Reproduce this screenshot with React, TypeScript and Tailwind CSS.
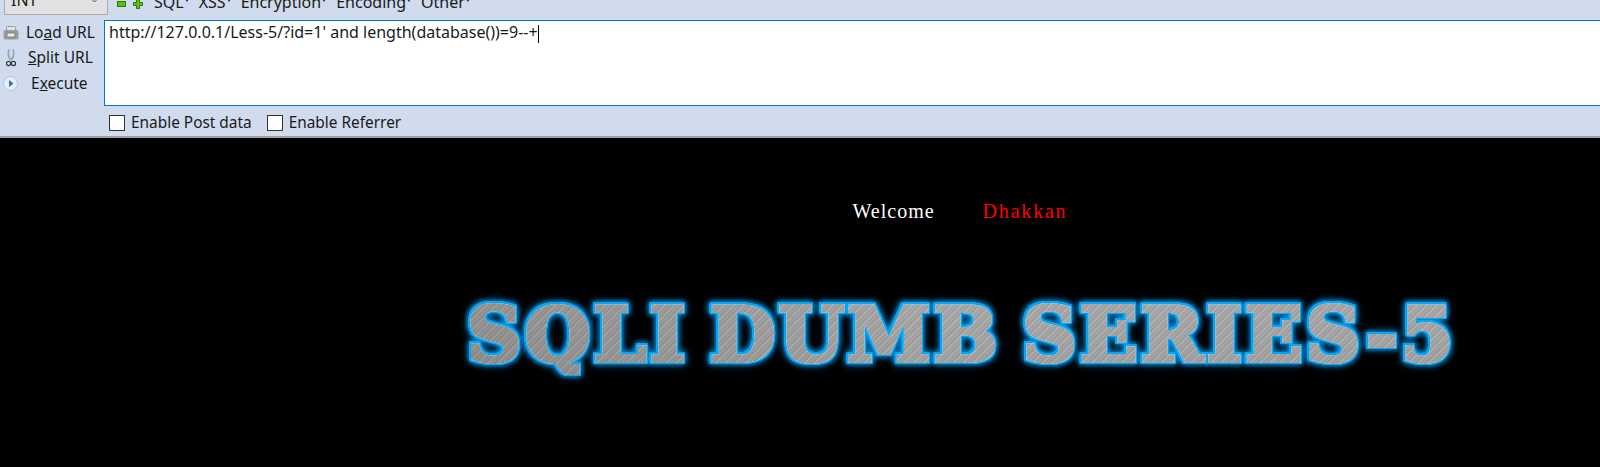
const sans = "font-['Noto_Sans',sans-serif]"

const MenuItem = ({ label }: { label: string }) => (
  <span className="flex items-start">
    {label}
    <svg width="4" height="3" viewBox="0 0 4 3" className="mt-[7px] ml-[1px]">
      <path d="M0 0 H4 L2 3 Z" fill="#333" />
    </svg>
  </span>
)

const Toolbar = () => (
  <div className={`flex flex-col h-[138px] bg-[#d0dbee] border-b-2 border-[#a0a0a0] text-[#1a1a1a] text-[16px] overflow-hidden ${sans}`}>
    <div className="flex items-end h-[20px] shrink-0">
      <div className="flex items-center justify-between ml-1 w-[104px] h-[30px] -mt-[15px] mb-[5px] pl-[6px] pr-[6px] bg-[#e1e1e1] border border-[#adadad]">
        <span>INT</span>
        <svg width="11" height="6" viewBox="0 0 11 6" className="mr-[1px]">
          <path d="M1 0.5 L5.5 5 L10 0.5" fill="none" stroke="#555" strokeWidth="1" />
        </svg>
      </div>
      <div className="flex items-center gap-[7px] ml-[9px] mb-[11px]">
        <svg width="9" height="6" viewBox="0 0 9 6">
          <rect x="0.5" y="0.5" width="8" height="5" fill="#58c20c" stroke="#2c7a06" />
        </svg>
        <svg width="10" height="10" viewBox="0 0 10 10">
          <path d="M3.5 0.5 H6.5 V3.5 H9.5 V6.5 H6.5 V9.5 H3.5 V6.5 H0.5 V3.5 H3.5 Z" fill="#58c20c" stroke="#2c7a06" />
        </svg>
      </div>
      <div className="flex gap-[10px] ml-[11px] mb-[8px] leading-[20px]">
        <MenuItem label="SQL" />
        <MenuItem label="XSS" />
        <MenuItem label="Encryption" />
        <MenuItem label="Encoding" />
        <MenuItem label="Other" />
      </div>
    </div>
    <div className="flex flex-1 min-h-0">
      <div className="flex flex-col w-[104px] shrink-0 text-[15.5px]">
        <div className="flex items-center h-[25px] pl-[3px] gap-[7px]">
          <svg width="16" height="14" viewBox="0 0 16 14">
            <rect x="3.5" y="0.5" width="9" height="5" rx="1" fill="#e4e4e4" stroke="#9a9a9a" />
            <rect x="0.5" y="4" width="15" height="9.5" rx="2" fill="#9c9c9c" />
            <rect x="4" y="7" width="8" height="4" rx="1" fill="#ececec" stroke="#666" strokeWidth="0.7" />
          </svg>
          <span>Lo<span className="underline">a</span>d URL</span>
        </div>
        <div className="flex items-center h-[26px] pl-[6px] gap-[12px]">
          <svg width="10" height="18" viewBox="0 0 10 18">
            <path d="M3.2 0.5 C1.5 4 2.5 8 4.6 11 M6.8 0.5 C8.5 4 7.5 8 5.4 11" stroke="#8aa3c4" strokeWidth="1.6" fill="none" />
            <circle cx="2.6" cy="14.5" r="2.1" fill="none" stroke="#3a3a3a" strokeWidth="1.3" />
            <circle cx="7.4" cy="14.5" r="2.1" fill="none" stroke="#3a3a3a" strokeWidth="1.3" />
          </svg>
          <span><span className="underline">S</span>plit URL</span>
        </div>
        <div className="flex items-center h-[25px] pl-[3px] gap-[13px]">
          <svg width="15" height="15" viewBox="0 0 15 15">
            <circle cx="7.5" cy="7.5" r="7" fill="#e6edf8" stroke="#a9c6ea" />
            <path d="M6 4 L10.5 7.5 L6 11 Z" fill="#2f74c0" />
          </svg>
          <span>E<span className="underline">x</span>ecute</span>
        </div>
      </div>
      <div className="flex flex-col flex-1 min-w-0">
        <div className="h-[86px] shrink-0 bg-white border-y border-l border-[#0078d7] pl-[4px] leading-[22px]">
          http://127.0.0.1/Less-5/?id=1' and length(database())=9--+
          <span className="inline-block w-[1px] h-[18px] bg-black align-middle" />
        </div>
        <div className="flex items-center pl-[5px] pt-[3px] h-[30px] shrink-0 text-[15.4px]">
          <span className="w-[16px] h-[16px] bg-white border border-[#333] mr-[6px]" />
          <span className="mr-[15px]">Enable Post data</span>
          <span className="w-[16px] h-[16px] bg-white border border-[#333] mr-[6px]" />
          <span>Enable Referrer</span>
        </div>
      </div>
    </div>
  </div>
)

const App: React.FC = () => {
  return (
    <div className="bg-black h-[467px] overflow-hidden">
      <Toolbar />
      <div className="flex flex-col items-center pl-[320px]">
        <p className="flex gap-[48px] mt-[61px] text-[20px] leading-[24px] whitespace-pre font-['Liberation_Serif',serif] text-white">
          <span className="tracking-[1px]">Welcome</span>
          <span className="tracking-[1.8px] text-[#ff0000]">Dhakkan</span>
        </p>
        <h1 className="mt-[72px] ml-[4px] text-[75px] leading-[80px] font-bold tracking-[3.5px] [word-spacing:-8px] whitespace-pre font-['DejaVu_Serif',serif] bg-[linear-gradient(90deg,rgba(0,0,0,0.12),rgba(0,0,0,0)_45%),repeating-linear-gradient(135deg,rgba(255,255,255,0.18)_0px,rgba(0,0,0,0.08)_2px,rgba(255,255,255,0.06)_3px,rgba(0,0,0,0.08)_5px,rgba(255,255,255,0.12)_7px),linear-gradient(#aaaaaa,#a2a2a2)] bg-clip-text text-transparent [-webkit-text-stroke:4px_transparent] [filter:drop-shadow(0_0_0.5px_#f0f8ff)_drop-shadow(1.5px_0_0_#00a8f5)_drop-shadow(-1.5px_0_0_#00a8f5)_drop-shadow(0_1.5px_0_#00a8f5)_drop-shadow(0_-1.5px_0_#00a8f5)_drop-shadow(0_0_2px_#0090e0)_drop-shadow(0_0_3px_#0078c0)]">
          SQLI DUMB SERIES-5
        </h1>
      </div>
    </div>
  )
}

export default App
